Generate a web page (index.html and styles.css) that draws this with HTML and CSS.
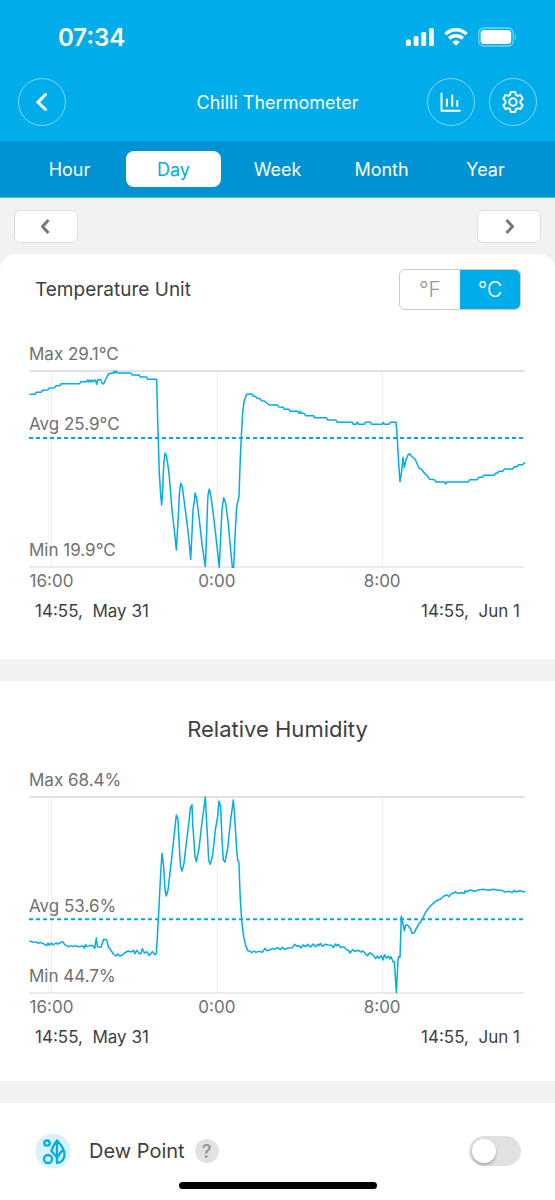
FILE: index.html
```html
<!DOCTYPE html>
<html lang="en">
<head>
<meta charset="utf-8">
<meta name="viewport" content="width=device-width, initial-scale=1">
<title>Chilli Thermometer</title>
<link rel="stylesheet" href="styles.css">
</head>
<body>
<header class="header">
  <div class="status">
    <span class="clock">07:34</span>
    <div class="status-icons">
      <svg width="28" height="18" viewBox="0 0 28 18" fill="#fff" aria-hidden="true">
        <rect x="0" y="11.5" width="4.8" height="6.5" rx="1.5"/><rect x="7.7" y="8" width="4.8" height="10" rx="1.5"/><rect x="15.3" y="4" width="4.8" height="14" rx="1.5"/><rect x="23" y="0" width="4.8" height="18" rx="1.5"/>
      </svg>
      <svg width="24" height="18" viewBox="0 0 24 18" aria-hidden="true">
        <g fill="none" stroke="#fff" stroke-width="3.4"><path d="M1.400 6.100a15.200 15.200 0 0 1 21.200 0"/><path d="M5.200 10.500a9.800 9.800 0 0 1 13.600 0"/></g>
        <path d="M12 17.600 8.200 13.900a5.600 5.600 0 0 1 7.600 0Z" fill="#fff"/>
      </svg>
      <svg width="39" height="20" viewBox="0 0 39 20" aria-hidden="true">
        <rect x=".7" y="1" width="34.6" height="18" rx="5" fill="none" stroke="#fff" stroke-opacity=".45" stroke-width="1.3"/>
        <rect x="2.6" y="3" width="30.6" height="14" rx="3.4" fill="#fff"/>
        <path d="M37 7.200c1.600.6 1.600 5 0 5.600Z" fill="#fff" fill-opacity=".5"/>
      </svg>
    </div>
  </div>
  <div class="titlebar">
    <button class="round" type="button" aria-label="Back">
      <svg width="24" height="24" viewBox="0 0 24 24" fill="none" stroke="#fff" stroke-width="3" stroke-linecap="round" stroke-linejoin="miter"><path d="M15.500 4.500 8 12.200 15.500 19.500"/></svg>
    </button>
    <h1 class="title">Chilli Thermometer</h1>
    <div class="actions">
      <button class="round" type="button" aria-label="Statistics">
        <svg width="24" height="24" viewBox="0 0 24 24" fill="none" stroke="#fff" stroke-width="2" stroke-linecap="round" stroke-linejoin="round"><path d="M2.500 3.500v17.200h18.300M8 9.500v6.500M13.200 5.500V16M18.300 11v5"/></svg>
      </button>
      <button class="round" type="button" aria-label="Settings">
        <svg width="24" height="24" viewBox="0 0 24 24" fill="none" stroke="#fff" stroke-width="2" stroke-linejoin="round"><path d="M9.800 2h4.400l.8 3 1.500.9 3-.9 2.200 3.700-2.200 2.200v2.200l2.200 2.200-2.200 3.700-3-.8-1.500.8-.8 3H9.800L9 19l-1.500-.8-3 .8-2.200-3.700 2.200-2.200v-2.200L2.300 8.700 4.500 5l3 .9L9 5Z"/><circle cx="12" cy="12" r="3.700"/></svg>
      </button>
    </div>
  </div>
</header>
<nav class="tabs" aria-label="Period">
  <button class="tab" type="button">Hour</button>
  <button class="tab tab-active" type="button" aria-current="true">Day</button>
  <button class="tab" type="button">Week</button>
  <button class="tab" type="button">Month</button>
  <button class="tab" type="button">Year</button>
</nav>
<main>
  <div class="pager">
    <button class="page-btn" type="button" aria-label="Previous day">
      <svg width="20" height="20" viewBox="0 0 20 20" fill="none" stroke="#777" stroke-width="3" stroke-linejoin="round"><path d="m12.500 3-6 6.500 6 6.500"/></svg>
    </button>
    <button class="page-btn" type="button" aria-label="Next day">
      <svg width="20" height="20" viewBox="0 0 20 20" fill="none" stroke="#777" stroke-width="3" stroke-linejoin="round"><path d="m7.500 3 6 6.500-6 6.500"/></svg>
    </button>
  </div>

  <section class="card card-first">
    <div class="unit-row">
      <span class="unit-title" id="unit-title">Temperature Unit</span>
      <div class="segment" role="radiogroup" aria-labelledby="unit-title">
        <label class="segment-item"><input class="segment-input" type="radio" name="unit" value="f"><span class="segment-text">°F</span></label>
        <label class="segment-item"><input class="segment-input" type="radio" name="unit" value="c" checked><span class="segment-text">°C</span></label>
      </div>
    </div>
    <div class="chart">
      <div class="label label-max">Max 29.1°C</div>
      <div class="plot">
        <svg class="canvas" viewBox="27 93 1488 588" preserveAspectRatio="none" role="img" aria-label="Temperature over 24 hours">
          <path class="grid" d="M95 93V681M592 93V681M1087 93V681"/>
          <path class="bound" d="M27 93H1515"/>
          <path class="base" d="M27 681H1515"/>
          <path class="average" d="M27 294H1515"/>
          <polyline class="series" points="28,163 45,163 48,157 63,157 67,151 83,150 88,144 104,143 108,137 119,137 124,131 179,131 183,125 200,125 203,120 206,126 209,120 213,126 217,120 221,125 225,120 227,120 230,133 234,119 242,119 247,131 251,131 256,120 266,101 279,99 282,94 285,99 289,93 292,99 332,99 337,105 357,105 361,111 379,111 384,118 410,118 413,240 418,400 422,465 425,495 427,470 430,400 432,365 435,340 439,347 443,370 447,400 456,510 463,570 469,630 476,510 478,460 482,430 487,440 492,480 500,540 507,600 512,658 515,600 519,510 523,485 525,459 530,475 538,540 547,620 556,680 560,580 562,510 564,465 568,447 573,470 582,540 590,610 598,682 602,590 606,510 611,473 617,490 625,550 631,620 637,682 641,682 645,590 650,500 657,470 661,350 664,290 668,220 672,185 679,165 682,162 696,162 699,168 706,169 711,175 720,176 725,182 733,183 740,189 748,195 773,195 776,201 790,202 793,208 807,208 811,214 834,214 837,220 841,214 844,220 852,220 857,227 880,227 883,233 919,233 923,240 948,240 952,247 997,247 1000,253 1008,253 1012,246 1016,253 1033,253 1037,246 1051,246 1055,253 1086,253 1090,247 1093,253 1107,253 1111,247 1128,247 1131,280 1136,370 1140,425 1145,395 1149,352 1153,382 1158,359 1165,343 1170,342 1175,350 1185,357 1193,375 1198,385 1205,388 1215,402 1222,407 1229,418 1243,419 1248,426 1273,426 1277,432 1281,426 1345,426 1349,419 1371,419 1376,412 1387,412 1392,406 1422,406 1427,400 1432,400 1437,394 1448,394 1453,387 1478,387 1483,380 1491,380 1496,374 1508,374 1515,367"/>
        </svg>
        <div class="label label-avg label-avg-temp">Avg 25.9°C</div>
        <div class="label label-min">Min 19.9°C</div>
      </div>
      <div class="ticks"><span class="tick">16:00</span><span class="tick">0:00</span><span class="tick">8:00</span></div>
      <div class="dates"><span>14:55,&nbsp; May 31</span><span>14:55,&nbsp; Jun 1</span></div>
    </div>
  </section>

  <section class="card card-humidity">
    <h2 class="card-title">Relative Humidity</h2>
    <div class="chart">
      <div class="label label-max">Max 68.4%</div>
      <div class="plot">
        <svg class="canvas" viewBox="27 291 1488 588" preserveAspectRatio="none" role="img" aria-label="Relative humidity over 24 hours">
          <path class="grid" d="M95 291V879M592 291V879M1087 291V879"/>
          <path class="bound" d="M27 291H1515"/>
          <path class="base" d="M27 879H1515"/>
          <path class="average" d="M27 658H1515"/>
          <g transform="translate(0 540)">
            <polyline class="series" points="28,183 38,186 50,187 55,190 60,187 68,190 74,193 80,197 84,189 88,196 94,189 99,195 108,189 113,192 128,185 134,194 145,200 152,197 158,200 166,197 176,200 190,198 193,205 197,194 201,200 212,196 219,198 224,205 229,174 232,200 243,202 251,178 260,180 266,203 271,208 280,222 288,228 294,222 299,228 306,226 313,219 324,213 334,216 340,211 345,221 350,211 357,220 362,221 367,206 373,219 380,215 388,227 397,215 405,224 409,220 412,170 416,100 418,60"/>
          </g>
          <polyline class="series" points="418,600 422,520 426,460 431,500 435,570 439,588 444,570 455,475 462,410 469,345 474,358 479,460 482,500 486,513 492,490 500,420 507,365 511,325 516,314 518,370 523,440 525,468 529,485 537,445 545,375 551,330 556,291 559,350 563,420 566,480 571,493 578,465 586,390 593,350 597,303 602,320 606,420 610,480 615,486 623,445 632,360 640,300 644,350 650,450 653,480 657,490 659,550 661,600 665,660 671,710 677,737 684,753 689,753 695,758 702,753 708,757 716,754 723,755 727,757 735,745 741,752 748,750 758,746 765,747"/>
          <g transform="translate(765 240)">
            <polyline class="series" points="0,507 8,503 16,509 22,502 28,508 40,504 52,503 59,493 66,499 72,497 78,504 84,495 92,500 98,493 106,501 115,492 121,500 128,493 132,497 136,490 142,499 150,493 160,495 170,496 175,503 181,492 186,498 190,493 198,503 206,500 216,510 222,512 225,519 233,509 240,514 250,511 258,516 264,513 270,520 277,527 284,518 293,524 302,536 307,528 312,535 318,527 324,540 328,524 334,534 340,529 344,537 348,530 354,545 358,545 361,590 364,638 366,600 369,540 371,530 375,532 379,408 384,432 388,452 392,435 398,436 403,442 407,447 411,460 418,458 424,445 432,432 442,418 450,400 460,385 475,370 485,362 497,357 507,348 516,345 522,350 527,343 541,336 550,340 560,338 568,340 570,332 575,336 585,330 600,334 610,330 625,328 640,331 655,328 670,331 680,331 690,336 703,334 711,338 718,331 722,336 735,332 745,335 750,335"/>
          </g>
        </svg>
        <div class="label label-avg label-avg-hum">Avg 53.6%</div>
        <div class="label label-min">Min 44.7%</div>
      </div>
      <div class="ticks"><span class="tick">16:00</span><span class="tick">0:00</span><span class="tick">8:00</span></div>
      <div class="dates"><span>14:55,&nbsp; May 31</span><span>14:55,&nbsp; Jun 1</span></div>
    </div>
  </section>

  <section class="card card-dew">
    <div class="dew-row">
      <svg width="36" height="36" viewBox="0 0 36 36" aria-hidden="true">
        <circle cx="18" cy="18" r="17.600" fill="#d9f2fc"/>
        <g fill="none" stroke="#00adea" stroke-width="2.300" stroke-linejoin="round"><circle cx="12" cy="10" r="2.700"/><circle cx="13" cy="26" r="4"/><path d="M22 24.500V7.500c-2.200 3-4.600 6-5.600 10.500L22 24.500M22 7.500c4.500 4.800 7.500 9.500 7.500 14 0 4.800-3.200 8.300-7.500 8.500v-5.500l6-8"/></g>
      </svg>
      <label class="dew-label" for="dew">Dew Point</label>
      <button class="help" type="button" aria-label="About dew point">?</button>
      <input class="switch" id="dew" type="checkbox" role="switch">
    </div>
    <div class="home-bar"></div>
  </section>
</main>
</body>
</html>
```
FILE: styles.css
```css
* { box-sizing: border-box; }

body {
  margin: 0;
  background: #f2f2f2;
  color: #404040;
  font-family: Inter, "Liberation Sans", sans-serif;
  font-size: 17px;
}

button {
  margin: 0;
  padding: 0;
  border: 0;
  font: inherit;
  display: flex;
  align-items: center;
  justify-content: center;
}

.header {
  background: #00adea;
  color: #fff;
  padding: 22px 18px 15px;
}

.status {
  display: flex;
  align-items: center;
  justify-content: space-between;
  height: 30px;
  padding: 0 20px 0 40px;
}

.clock { font-size: 24px; font-weight: 600; }

.status-icons { display: flex; align-items: center; gap: 10px; }

.titlebar {
  display: grid;
  grid-template-columns: 1fr auto 1fr;
  align-items: center;
  margin-top: 26px;
}

.title { margin: 0; font-size: 18px; font-weight: 400; }

.actions { display: flex; justify-content: flex-end; gap: 14px; }

.round {
  width: 48px;
  height: 48px;
  border: 1px solid rgba(255, 255, 255, .5);
  border-radius: 50%;
  background: transparent;
}

.tabs {
  display: grid;
  grid-template-columns: repeat(5, 1fr);
  gap: 9px;
  padding: 10px 22px;
  background: #0093d3;
  border-bottom: 1px solid #4bb8e4;
}

.tab {
  height: 36px;
  border-radius: 8px;
  background: transparent;
  color: #fff;
  font-size: 18px;
}

.tab-active { background: #fff; color: #00adea; }

.pager {
  display: flex;
  justify-content: space-between;
  padding: 12px 14px 11px;
}

.page-btn {
  width: 64px;
  height: 33px;
  border: 1px solid #dedede;
  border-radius: 6px;
  background: #fff;
}

.card { background: #fff; margin-bottom: 22px; }
.card-first { border-radius: 16px 16px 0 0; padding: 15px 0 36px; }
.card-humidity { padding: 34px 0 32px; }
.card-dew { margin-bottom: 0; padding: 30px 34px 11px 35px; }

.unit-row {
  display: flex;
  align-items: center;
  justify-content: space-between;
  padding: 0 34px 0 35px;
  margin-bottom: 32px;
}

.unit-title { font-size: 19px; }

.segment {
  display: flex;
  width: 122px;
  height: 41px;
  border: 1px solid #ccc;
  border-radius: 6px;
  overflow: hidden;
}

.segment-item { flex: 1; position: relative; }

.segment-input {
  position: absolute;
  inset: 0;
  margin: 0;
  opacity: 0;
}

.segment-text {
  display: flex;
  align-items: center;
  justify-content: center;
  height: 100%;
  color: #999;
  font-size: 21px;
  font-weight: 300;
}

.segment-input:checked + .segment-text { background: #00adea; color: #fff; }

.card-title {
  margin: 0 0 25px;
  font-size: 22px;
  font-weight: 400;
  line-height: 28px;
  text-align: center;
}

.chart { padding: 0 30px 0 29px; }

.label { color: #707070; line-height: 24px; }
.label-max { margin-bottom: 5px; }

.plot { position: relative; height: 196px; }

.canvas { display: block; width: 100%; height: 100%; overflow: visible; }
.canvas path, .canvas polyline { fill: none; vector-effect: non-scaling-stroke; }
.canvas .grid { stroke: #ededed; stroke-width: 1px; }
.canvas .bound { stroke: #e2e2e2; stroke-width: 2px; }
.canvas .base { stroke: #d6d6d6; stroke-width: 1px; }
.canvas .average { stroke: #00a6e4; stroke-width: 2px; stroke-dasharray: 4 3; }
.canvas .series { stroke: #00adea; stroke-width: 1.5; stroke-linejoin: round; }

.label-avg, .label-min { position: absolute; left: 0; }
.label-avg-temp { bottom: 131px; }
.label-avg-hum { bottom: 75px; }
.label-min { bottom: 5px; }

.ticks {
  display: grid;
  grid-template-columns: repeat(3, 1fr);
  margin-top: 2px;
  color: #707070;
  line-height: 24px;
}

.tick { width: 45px; text-align: center; }

.dates {
  display: flex;
  justify-content: space-between;
  margin-top: 6px;
  padding: 0 5px 0 6px;
  line-height: 24px;
}

.dew-row { display: flex; align-items: center; }

.dew-label { margin: 0 10px 0 18px; font-size: 20px; }

.help {
  width: 24px;
  height: 24px;
  border-radius: 50%;
  background: #e2e2e2;
  color: #999;
  font-size: 18px;
  font-weight: 600;
}

.switch {
  appearance: none;
  width: 52px;
  height: 30px;
  margin: 0 0 0 auto;
  padding: 3px;
  border-radius: 15px;
  background: #e1e1e1;
}

.switch::before {
  content: "";
  display: block;
  width: 24px;
  height: 24px;
  border-radius: 50%;
  background: #fff;
  box-shadow: 0 2px 3px rgba(0, 0, 0, .25);
}

.switch:checked { background: #00adea; }
.switch:checked::before { margin-left: auto; }

.home-bar {
  width: 198px;
  height: 7px;
  margin: 13px auto 0;
  border-radius: 4px;
  background: #000;
}
```
